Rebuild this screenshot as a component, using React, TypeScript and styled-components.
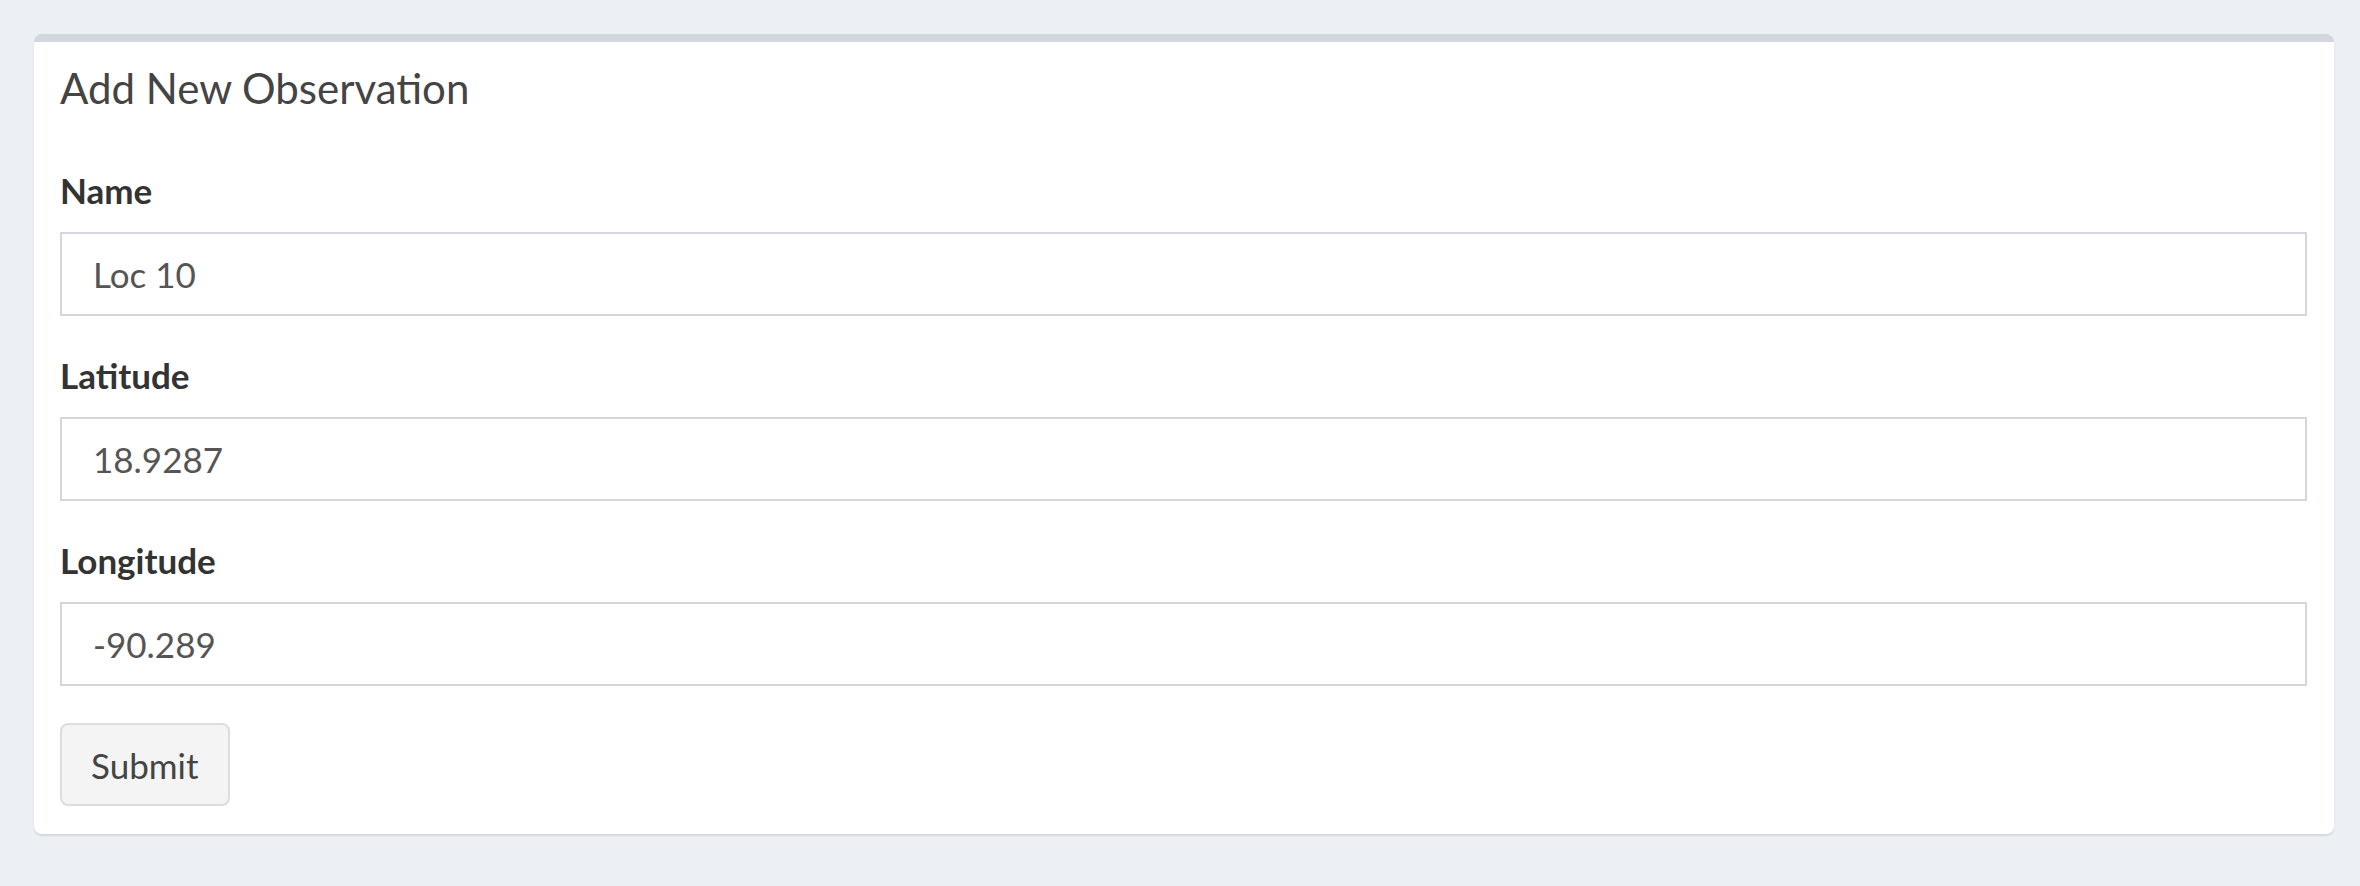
import React from "react";
import styled, { createGlobalStyle } from "styled-components";

const Global = createGlobalStyle`
  html, body {
    margin: 0;
    min-height: 100%;
    background: #ecf0f5;
  }
  body {
    font-family: Lato, "Open Sans", sans-serif;
    color: #333;
  }
`;

const Page = styled.div`
  padding: 34px 26px 40px 34px;
`;

const Box = styled.section`
  background: #fff;
  border-top: 8px solid #d2d6de;
  border-radius: 8px;
  box-shadow: 0 2px 2px rgba(0, 0, 0, 0.1);
  padding: 21px 27px 28px 26px;
`;

const Title = styled.h3`
  margin: 0;
  font-size: 42px;
  line-height: 50px;
  font-weight: 400;
  color: #444;
`;

const Form = styled.form`
  display: flex;
  flex-direction: column;
  gap: 38px;
  margin-top: 56px;
`;

const Group = styled.div`
  display: flex;
  flex-direction: column;
  gap: 21px;
`;

const Label = styled.label`
  font-size: 35px;
  line-height: 42px;
  font-weight: 700;
  color: #333;
`;

const Input = styled.input`
  box-sizing: border-box;
  height: 84px;
  width: 100%;
  margin: 0;
  padding: 0 31px;
  border: 2px solid #d2d6de;
  border-radius: 0;
  background: #fff;
  font-family: inherit;
  font-size: 35px;
  color: #555;
  outline: none;
`;

const Footer = styled.div`
  margin-top: -1px;
`;

const Button = styled.button`
  box-sizing: border-box;
  height: 83px;
  padding: 0 29px;
  border: 2px solid #ddd;
  border-radius: 8px;
  background: #f4f4f4;
  font-family: inherit;
  font-size: 35px;
  color: #444;
  cursor: pointer;
`;

const fields = [
  { id: "name", label: "Name", value: "Loc 10" },
  { id: "latitude", label: "Latitude", value: "18.9287" },
  { id: "longitude", label: "Longitude", value: "-90.289" },
];

export default function App() {
  return (
    <>
      <Global />
      <Page>
        <Box>
          <Title>Add New Observation</Title>
          <Form onSubmit={(e) => e.preventDefault()}>
            {fields.map((f) => (
              <Group key={f.id}>
                <Label htmlFor={f.id}>{f.label}</Label>
                <Input id={f.id} defaultValue={f.value} />
              </Group>
            ))}
            <Footer>
              <Button type="submit">Submit</Button>
            </Footer>
          </Form>
        </Box>
      </Page>
    </>
  );
}
